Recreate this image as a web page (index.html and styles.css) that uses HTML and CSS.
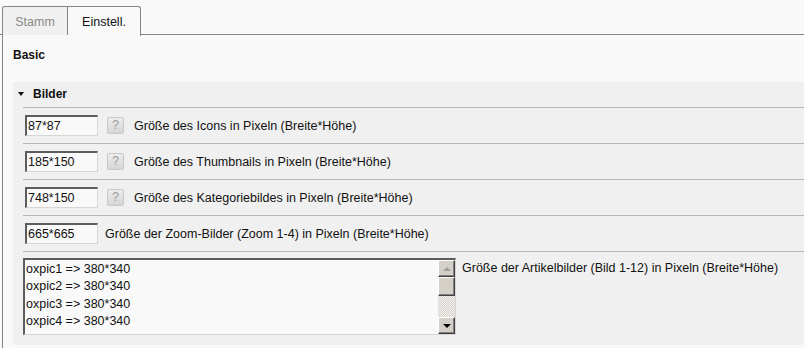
FILE: index.html
```html
<!DOCTYPE html>
<html lang="de">
<head>
  <meta charset="UTF-8">
  <title>Einstellungen</title>
  <link rel="stylesheet" href="styles.css">
</head>
<body>
  <div class="tabs">
    <div class="tab">Stamm</div>
    <div class="tab active">Einstell.</div>
  </div>

  <div class="content">
    <div class="basic">Basic</div>

    <div class="group">
      <div class="group-head"><span class="arrow"></span>Bilder</div>

      <div class="row">
        <input class="field" type="text" value="87*87">
        <span class="help">?</span>
        <span class="label">Größe des Icons in Pixeln (Breite*Höhe)</span>
      </div>
      <div class="row">
        <input class="field" type="text" value="185*150">
        <span class="help">?</span>
        <span class="label">Größe des Thumbnails in Pixeln (Breite*Höhe)</span>
      </div>
      <div class="row">
        <input class="field" type="text" value="748*150">
        <span class="help">?</span>
        <span class="label">Größe des Kategoriebildes in Pixeln (Breite*Höhe)</span>
      </div>
      <div class="row">
        <input class="field" type="text" value="665*665">
        <span class="label">Größe der Zoom-Bilder (Zoom 1-4) in Pixeln (Breite*Höhe)</span>
      </div>
      <div class="row row-area">
        <div class="area">
          <textarea class="area-text">oxpic1 =&gt; 380*340
oxpic2 =&gt; 380*340
oxpic3 =&gt; 380*340
oxpic4 =&gt; 380*340</textarea>
          <div class="scroll">
            <div class="sb-btn up"></div>
            <div class="sb-thumb"></div>
            <div class="sb-track"></div>
            <div class="sb-btn down"></div>
          </div>
        </div>
        <span class="label area-label">Größe der Artikelbilder (Bild 1-12) in Pixeln (Breite*Höhe)</span>
      </div>
    </div>
  </div>
</body>
</html>
```

FILE: styles.css
```css
body {
  margin: 0;
  background: #f9f9f9;
  font-family: "Liberation Sans", Arial, sans-serif;
  font-size: 12.5px;
  color: #111;
  height: 348px;
  overflow: hidden;
}
.tabs {
  display: flex;
  padding: 6px 0 0 2px;
  border-bottom: 1px solid #858585;
  height: 28px;
}
.tab {
  width: 64px;
  height: 28px;
  line-height: 30px;
  text-align: center;
  border: 1px solid #858585;
  border-bottom: none;
  background: #f0f0f0;
  color: #8a8a8a;
  border-radius: 3px 0 0 0;
}
.tab.active {
  width: 72px;
  border-left: none;
  background: #f9f9f9;
  color: #111;
  height: 29px;
  margin-bottom: -1px;
  border-radius: 0 3px 0 0;
}
.content {
  box-sizing: border-box;
  margin-left: 2px;
  border-left: 1px solid #858585;
  padding: 13px 0 0 10px;
  height: 313px;
}
.basic {
  font-weight: bold;
  font-size: 12px;
  height: 34px;
}
.group {
  background: #f0f0f0;
  padding: 0 0 10px 10px;
}
.group-head {
  display: flex;
  align-items: center;
  height: 24px;
  padding-bottom: 1px;
  font-weight: bold;
  font-size: 12px;
}
.arrow {
  width: 0;
  height: 0;
  border-left: 3px solid transparent;
  border-right: 3px solid transparent;
  border-top: 4px solid #111;
  margin: 0 9px 0 -5px;
}
.row {
  display: flex;
  align-items: center;
  border-top: 1px solid #b5b5b5;
  height: 35px;
}
.field {
  width: 69px;
  height: 18px;
  margin: 0 0 1px 2px;
  padding: 0 0 0 1px;
  border-style: solid;
  border-width: 2px 1px 1px 2px;
  border-color: #5c5c5c #d6d6d6 #d6d6d6 #5c5c5c;
  background: #f9f9f9;
  font-family: "Liberation Sans", Arial, sans-serif;
  font-size: 12.5px;
  color: #111;
}
.help {
  width: 15px;
  height: 15px;
  margin-left: 9px;
  border: 1px solid #c8c8c8;
  border-radius: 2px;
  background: linear-gradient(#ececec, #d6d6d6);
  color: #9a9a9a;
  font-size: 12px;
  line-height: 15px;
  text-align: center;
}
.label {
  margin-left: 7px;
}
.help + .label {
  margin-left: 10px;
}
.row-area {
  height: auto;
  align-items: flex-start;
  padding-top: 6px;
}
.area {
  display: flex;
  width: 430px;
  height: 74px;
  border-style: solid;
  border-width: 2px 1px 1px 2px;
  border-color: #5c5c5c #d6d6d6 #d6d6d6 #5c5c5c;
  background: #f9f9f9;
}
.area-text {
  flex: 1;
  border: none;
  margin: 0;
  padding: 1px 0 0 1px;
  background: transparent;
  resize: none;
  overflow: hidden;
  font-family: "Liberation Sans", Arial, sans-serif;
  font-size: 12.5px;
  line-height: 17.4px;
  color: #111;
}
.scroll {
  display: flex;
  flex-direction: column;
  width: 17px;
}
.sb-btn,
.sb-thumb {
  box-sizing: border-box;
  background: #d4d0c8;
  border: 1px solid;
  border-color: #fff #404040 #404040 #fff;
  box-shadow: inset -1px -1px #808080;
}
.sb-btn {
  height: 17px;
  display: flex;
  align-items: center;
  justify-content: center;
}
.sb-btn::after {
  content: "";
  border-left: 4px solid transparent;
  border-right: 4px solid transparent;
}
.up::after {
  border-bottom: 4px solid #a0a0a0;
}
.down::after {
  border-top: 4px solid #000;
}
.sb-thumb {
  height: 19px;
}
.sb-track {
  flex: 1;
  background: repeating-conic-gradient(#d4d0c8 0 25%, #f4f4f4 0 50%) 0 0 / 2px 2px;
}
.area-label {
  margin-left: 6px;
  margin-top: 3px;
}
```
